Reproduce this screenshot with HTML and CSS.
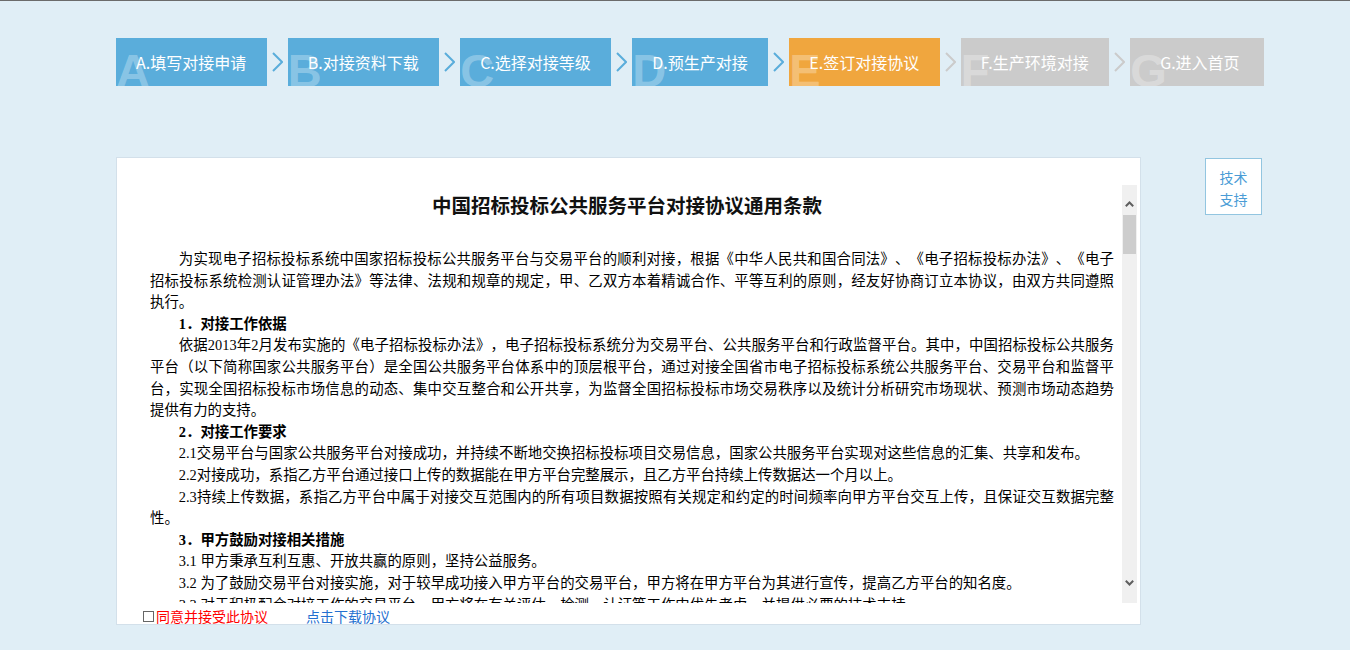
FILE: index.html
```html
<!DOCTYPE html>
<html lang="zh-CN">
<head>
<meta charset="utf-8">
<title>签订对接协议</title>
<link rel="stylesheet" href="styles.css">
</head>
<body>
<nav class="steps">
  <div class="step step--done"><span class="step__mark">A</span><span class="step__label">A.填写对接申请</span></div>
  <span class="step-arrow step-arrow--done"><svg width="11" height="20" viewBox="0 0 11 20"><path d="M1 1 L10 10 L1 19" fill="none" stroke="currentColor" stroke-width="2"/></svg></span>
  <div class="step step--done"><span class="step__mark">B</span><span class="step__label">B.对接资料下载</span></div>
  <span class="step-arrow step-arrow--done"><svg width="11" height="20" viewBox="0 0 11 20"><path d="M1 1 L10 10 L1 19" fill="none" stroke="currentColor" stroke-width="2"/></svg></span>
  <div class="step step--done"><span class="step__mark">C</span><span class="step__label">C.选择对接等级</span></div>
  <span class="step-arrow step-arrow--done"><svg width="11" height="20" viewBox="0 0 11 20"><path d="M1 1 L10 10 L1 19" fill="none" stroke="currentColor" stroke-width="2"/></svg></span>
  <div class="step step--done"><span class="step__mark">D</span><span class="step__label">D.预生产对接</span></div>
  <span class="step-arrow step-arrow--done"><svg width="11" height="20" viewBox="0 0 11 20"><path d="M1 1 L10 10 L1 19" fill="none" stroke="currentColor" stroke-width="2"/></svg></span>
  <div class="step step--current"><span class="step__mark">E</span><span class="step__label">E.签订对接协议</span></div>
  <span class="step-arrow"><svg width="11" height="20" viewBox="0 0 11 20"><path d="M1 1 L10 10 L1 19" fill="none" stroke="currentColor" stroke-width="2"/></svg></span>
  <div class="step"><span class="step__mark">F</span><span class="step__label">F.生产环境对接</span></div>
  <span class="step-arrow"><svg width="11" height="20" viewBox="0 0 11 20"><path d="M1 1 L10 10 L1 19" fill="none" stroke="currentColor" stroke-width="2"/></svg></span>
  <div class="step step--last"><span class="step__mark">G</span><span class="step__label">G.进入首页</span></div>
</nav>

<main class="main">
  <section class="panel">
    <div class="doc">
      <div class="doc__body">
        <h1 class="doc__title">中国招标投标公共服务平台对接协议通用条款</h1>
        <div class="doc__text">
          <p>为实现电子招标投标系统中国家招标投标公共服务平台与交易平台的顺利对接，根据《中华人民共和国合同法》、《电子招标投标办法》、《电子招标投标系统检测认证管理办法》等法律、法规和规章的规定，甲、乙双方本着精诚合作、平等互利的原则，经友好协商订立本协议，由双方共同遵照执行。</p>
          <h2>1．对接工作依据</h2>
          <p>依据2013年2月发布实施的《电子招标投标办法》，电子招标投标系统分为交易平台、公共服务平台和行政监督平台。其中，中国招标投标公共服务平台（以下简称国家公共服务平台）是全国公共服务平台体系中的顶层根平台，通过对接全国省市电子招标投标系统公共服务平台、交易平台和监督平台，实现全国招标投标市场信息的动态、集中交互整合和公开共享，为监督全国招标投标市场交易秩序以及统计分析研究市场现状、预测市场动态趋势提供有力的支持。</p>
          <h2>2．对接工作要求</h2>
          <p>2.1交易平台与国家公共服务平台对接成功，并持续不断地交换招标投标项目交易信息，国家公共服务平台实现对这些信息的汇集、共享和发布。</p>
          <p>2.2对接成功，系指乙方平台通过接口上传的数据能在甲方平台完整展示，且乙方平台持续上传数据达一个月以上。</p>
          <p>2.3持续上传数据，系指乙方平台中属于对接交互范围内的所有项目数据按照有关规定和约定的时间频率向甲方平台交互上传，且保证交互数据完整性。</p>
          <h2>3．甲方鼓励对接相关措施</h2>
          <p>3.1 甲方秉承互利互惠、开放共赢的原则，坚持公益服务。</p>
          <p>3.2 为了鼓励交易平台对接实施，对于较早成功接入甲方平台的交易平台，甲方将在甲方平台为其进行宣传，提高乙方平台的知名度。</p>
          <p>3.3 对于积极配合对接工作的交易平台，甲方将在有关评估、检测、认证等工作中优先考虑，并提供必要的技术支持。</p>
          <h2>4．乙方对接工作责任</h2>
          <p>4.1 乙方应当按照有关规定和技术规范，及时、准确、完整地向甲方平台交互上传招标投标项目交易信息。</p>
        </div>
      </div>
      <div class="scrollbar" aria-hidden="true">
        <span class="scrollbar__btn scrollbar__btn--up"><svg width="9" height="6" viewBox="0 0 9 6"><path d="M0.8 5.2 L4.5 1.5 L8.2 5.2" fill="none" stroke="currentColor" stroke-width="2"/></svg></span>
        <span class="scrollbar__thumb"></span>
        <span class="scrollbar__track"></span>
        <span class="scrollbar__btn scrollbar__btn--down"><svg width="9" height="6" viewBox="0 0 9 6"><path d="M0.8 0.8 L4.5 4.5 L8.2 0.8" fill="none" stroke="currentColor" stroke-width="2"/></svg></span>
      </div>
    </div>
    <div class="agree">
      <label class="agree__check"><span class="agree__box"></span>同意并接受此协议</label>
      <a class="agree__link" href="#">点击下载协议</a>
    </div>
  </section>
  <aside class="support">技术<br>支持</aside>
</main>
</body>
</html>
```

FILE: styles.css
```css
html, body {
  margin: 0;
  padding: 0;
}

body {
  background: #e0eef6;
  border-top: 1px solid #6b6b6b;
  font-family: "Noto Sans CJK SC", sans-serif;
  min-height: 649px;
}

/* ---------- steps ---------- */
.steps {
  display: flex;
  align-items: center;
  margin: 37px 0 0 116px;
}

.step {
  position: relative;
  overflow: hidden;
  height: 48px;
  line-height: 48px;
  padding: 0 20.5px 0 20px;
  background: #cbcbcb;
  color: #fff;
  font-size: 16px;
  white-space: nowrap;
}

.step--done {
  background: #5aaddb;
}

.step--current {
  background: #f0a63e;
}

.step--last {
  padding: 0 24px 0 30px;
}

.step__mark {
  position: absolute;
  left: 0;
  bottom: -8px;
  font-family: "Liberation Sans", Arial, sans-serif;
  font-weight: bold;
  font-size: 47px;
  line-height: 1;
  color: rgba(255, 255, 255, 0.3);
}

.step__label {
  position: relative;
}

.step-arrow {
  display: flex;
  justify-content: center;
  align-items: center;
  width: 21px;
  height: 48px;
  color: #cbcbcb;
}

.step-arrow--done {
  color: #5aaddb;
}

/* ---------- main ---------- */
.main {
  display: flex;
  align-items: flex-start;
  gap: 64px;
  margin: 71px 0 0 116px;
}

.panel {
  box-sizing: border-box;
  width: 1025px;
  height: 468px;
  background: #fff;
  border: 1px solid #d3e0ea;
  padding-top: 27px;
  display: flex;
  flex-direction: column;
}

.doc {
  display: flex;
  height: 418px;
}

.doc__body {
  flex: 1;
  overflow: hidden;
  color: #000;
}

.doc__title {
  margin: 5px 0 0;
  padding-left: 15px;
  font-size: 19.5px;
  line-height: 30px;
  font-weight: bold;
  text-align: center;
  color: #111;
}

.doc__text {
  margin-top: 29px;
  padding: 0 8px 0 33px;
  font-family: "Liberation Serif", "Noto Sans CJK SC", serif;
  font-size: 14.4px;
  line-height: 21.6px;
  text-align: justify;
  text-spacing-trim: space-all;
}

.doc__text p,
.doc__text h2 {
  margin: 0;
  text-indent: 2em;
}

.doc__text h2 {
  font-size: 14.4px;
  font-weight: bold;
}

/* fake scrollbar */
.scrollbar {
  width: 15px;
  margin-right: 3px;
  background: #f0f0f0;
  display: flex;
  flex-direction: column;
  align-items: center;
}

.scrollbar__btn {
  display: flex;
  justify-content: center;
  width: 15px;
  height: 30px;
  color: #5f5f5f;
}

.scrollbar__btn--up {
  align-items: flex-end;
  padding-bottom: 8px;
  box-sizing: border-box;
}

.scrollbar__btn--down {
  align-items: flex-start;
  padding-top: 7px;
  box-sizing: border-box;
}

.scrollbar__thumb {
  width: 13px;
  height: 39px;
  background: #cdcdcd;
}

.scrollbar__track {
  flex: 1;
}

/* agreement row */
.agree {
  display: flex;
  align-items: center;
  gap: 38px;
  height: 21px;
  padding: 5px 0 0 26px;
  box-sizing: border-box;
  font-size: 14px;
  line-height: 16px;
}

.agree__check {
  display: flex;
  align-items: center;
  color: #ff0000;
}

.agree__box {
  display: inline-block;
  width: 9px;
  height: 9px;
  border: 1px solid #666;
  margin-right: 2px;
}

.agree__link {
  color: #2470d0;
  text-decoration: none;
}

/* support box */
.support {
  box-sizing: border-box;
  width: 57px;
  height: 57px;
  margin-top: 1px;
  padding-top: 7px;
  background: #fff;
  border: 1px solid #92c5e0;
  color: #4a9cd6;
  font-size: 14px;
  line-height: 22px;
  text-align: center;
}
```
